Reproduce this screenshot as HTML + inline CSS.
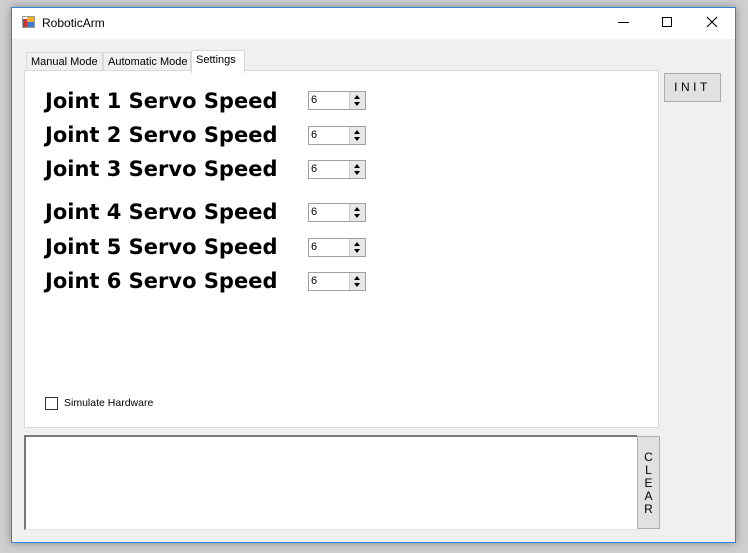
<!DOCTYPE html><html><head><style>
*{margin:0;padding:0;box-sizing:border-box}
body{width:748px;height:553px;background:#cfcfcf;position:relative;overflow:hidden;font-family:"Liberation Sans",sans-serif}
.win{position:absolute;left:11px;top:7px;width:725px;height:536px;background:#f0f0f0;border:1px solid #2b86d9;box-shadow:0 0 8px rgba(0,0,0,.35)}
.tb{position:absolute;left:0;top:0;right:0;height:31px;background:#fff}
.a{position:absolute;white-space:nowrap}
.lbl{position:absolute;left:20px;font-family:"DejaVu Sans",sans-serif;font-weight:bold;font-size:21px;color:#000;line-height:24px;white-space:nowrap}
.sp{position:absolute;left:283px;width:58px;height:19px;border:1px solid #a0a0a0;background:#fff;font-size:11px;padding-left:2px;line-height:17px}
.sp .b{position:absolute;right:0;top:0;width:16px;height:17px;background:#e8e8e8;border-left:1px solid #ccc}
.sp .b:before{content:"";position:absolute;left:4px;top:3px;border:3.5px solid transparent;border-bottom:4px solid #000;border-top:0}
.sp .b:after{content:"";position:absolute;left:4px;top:10px;border:3.5px solid transparent;border-top:4px solid #000;border-bottom:0}
.tab{position:absolute;top:44px;height:20px;border:1px solid #d9d9d9;border-bottom:none;background:#f0f0f0;font-size:11px;line-height:19px;padding:0 4px;color:#000;white-space:nowrap;overflow:hidden}
</style></head><body>
<div class="win">
<div class="tb">
<svg class="a" style="left:10px;top:8px" width="13" height="12"><rect x="0" y="3" width="5" height="8" fill="#c33"/><rect x="5" y="0" width="7" height="6" fill="#f0b020"/><rect x="5" y="6" width="7" height="5" fill="#3b7bd6"/><rect x="0.5" y="0.5" width="12" height="11" fill="none" stroke="#999"/></svg>
<div class="a" style="left:30px;top:8px;font-size:12px">RoboticArm</div>
<div class="a" style="left:606px;top:14px;width:11px;height:1px;background:#000"></div>
<div class="a" style="left:650px;top:9px;width:10px;height:10px;border:1px solid #000"></div>
<svg class="a" style="left:694px;top:8px" width="12" height="12"><path d="M1 1L11 11M11 1L1 11" stroke="#000" stroke-width="1.1"/></svg>
</div>
<div class="tab" style="left:14px;width:77px">Manual Mode</div>
<div class="tab" style="left:91px;width:88px">Automatic Mode</div>
<div class="tab" style="left:179px;top:42px;height:23px;width:54px;background:#fff;z-index:2">Settings</div>
<div class="a" style="left:12px;top:62px;width:635px;height:358px;background:#fff;border:1px solid #d9d9d9">
<div class="lbl" style="top:18px">Joint 1 Servo Speed</div>
<div class="lbl" style="top:52px">Joint 2 Servo Speed</div>
<div class="lbl" style="top:86px">Joint 3 Servo Speed</div>
<div class="lbl" style="top:129px">Joint 4 Servo Speed</div>
<div class="lbl" style="top:164px">Joint 5 Servo Speed</div>
<div class="lbl" style="top:198px">Joint 6 Servo Speed</div>
<div class="sp" style="top:20px">6<div class="b"></div></div>
<div class="sp" style="top:55px">6<div class="b"></div></div>
<div class="sp" style="top:89px">6<div class="b"></div></div>
<div class="sp" style="top:132px">6<div class="b"></div></div>
<div class="sp" style="top:167px">6<div class="b"></div></div>
<div class="sp" style="top:201px">6<div class="b"></div></div>
<div class="a" style="left:20px;top:326px;width:13px;height:13px;border:1px solid #333"></div>
<div class="a" style="left:39px;top:326px;font-size:10.5px">Simulate Hardware</div>
</div>
<div class="a" style="left:652px;top:65px;width:57px;height:29px;background:#e1e1e1;border:1px solid #adadad;font-size:12px;text-align:center;line-height:27px;letter-spacing:3.5px">INIT</div>
<div class="a" style="left:12px;top:427px;width:613px;height:95px;background:#fff;border-top:2px solid #777;border-left:2px solid #777;border-bottom:1px solid #e3e3e3"></div>
<div class="a" style="left:625px;top:428px;width:23px;height:93px;background:#e1e1e1;border:1px solid #adadad;font-size:12px;text-align:center;line-height:13px;padding-top:14px">C<br>L<br>E<br>A<br>R</div>
</div>
</body></html>
